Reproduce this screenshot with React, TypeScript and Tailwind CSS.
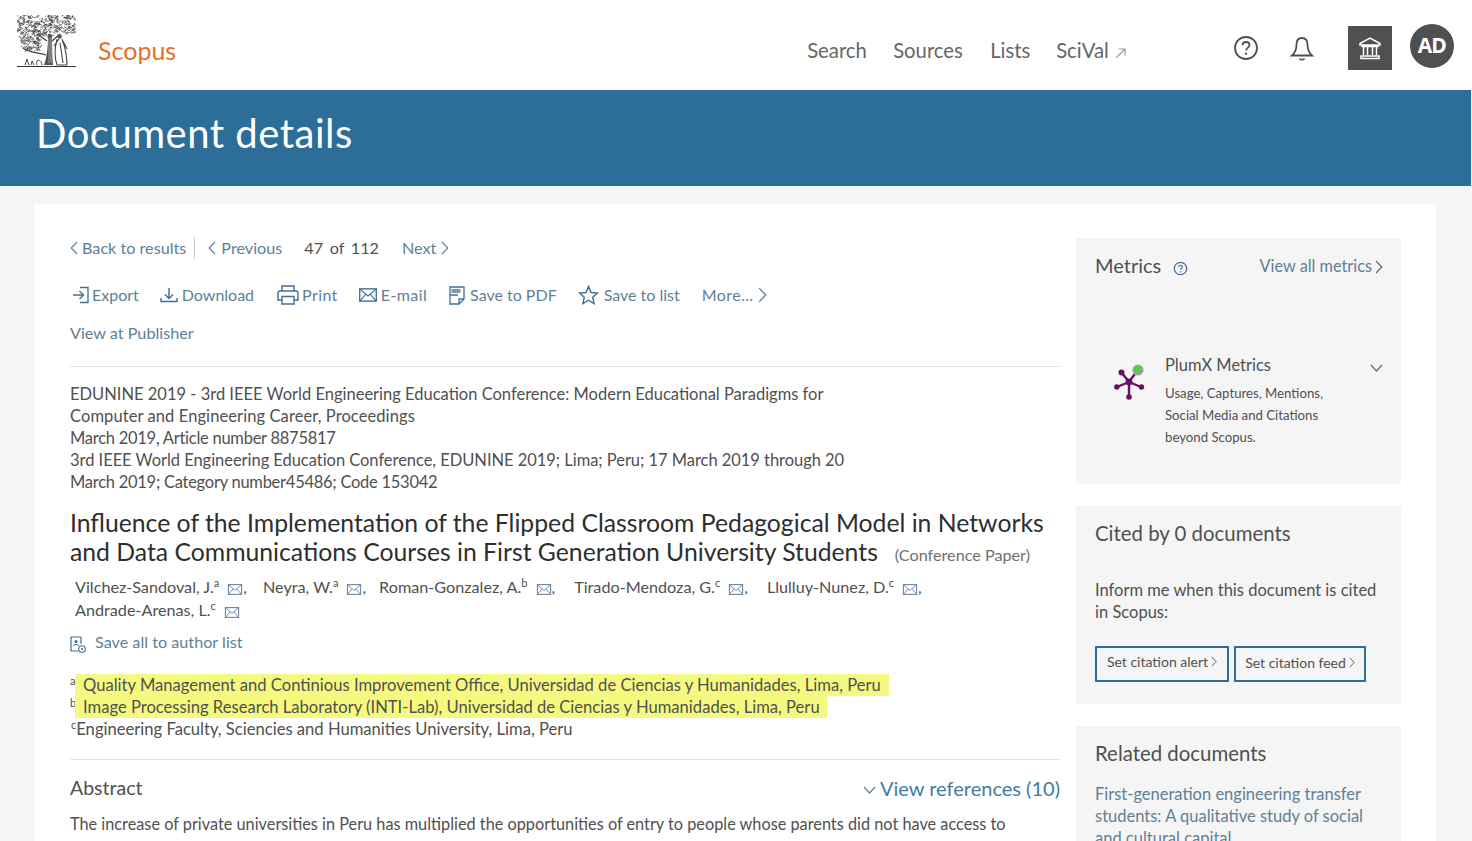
import React from "react";

const font = { fontFamily: "Lato, 'Open Sans', sans-serif" };

function Tree() {
  const strokes: string[] = [];
  let s = 11;
  const r = () => {
    s = (s * 16807) % 2147483647;
    return s / 2147483647;
  };
  for (let i = 0; i < 620; i++) {
    const x = 1 + r() * 57;
    const y = r() * 36;
    const a = (r() * 5 - 2.5).toFixed(1);
    const b = (r() * 5 - 2.5).toFixed(1);
    const c = (r() * 6 - 3).toFixed(1);
    const d = (r() * 4 - 2).toFixed(1);
    if (y > 21 && x > 24 && x < 36) continue;
    if (y > 18 && x >= 36) continue;
    if (y > 26 && x < 5) continue;
    strokes.push(`M${x.toFixed(1)} ${y.toFixed(1)}q${a} ${b} ${c} ${d}`);
  }
  return (
    <svg width="60" height="53" viewBox="0 0 60 53" fill="none">
      <path d={strokes.join("")} stroke="#4a4a4a" strokeWidth="0.75" />
      <path d="M31 20C31 32 30 42 27 50L36 50C35 40 35 30 35 20z" fill="#555" />
      <path d="M32 23V48M34 23V48" stroke="#ddd" strokeWidth="0.6" />
      <path d="M30 26L20 19M35 26L43 19M6 33C12 38 20 37 29 40" stroke="#444" strokeWidth="1.3" />
      <path d="M40 24C38 32 37 42 40 50M45 24C48 32 50 42 50 50M37 31L42 24M46 26L50 34M40 50H50M43 28L46 48" stroke="#444" strokeWidth="1.1" />
      <circle cx="42.500" cy="21.500" r="2.300" fill="#555" />
      <path d="M0 51.500H59" stroke="#333" strokeWidth="1.200" />
      <path d="M8 50L10 44L12 50M14 50L15 46L17 50M20 50C18 44 24 43 25 50" stroke="#444" strokeWidth="1" />
    </svg>
  );
}

function ChevLeft({ c = "#5e7f98", h = 14 }: { c?: string; h?: number }) {
  return (
    <svg width="8" height={h} viewBox="0 0 8 14" fill="none">
      <path d="M7 1L1.200 7L7 13" stroke={c} strokeWidth="1.200" />
    </svg>
  );
}

function ChevRight({ c = "#5e7f98", h = 14, w = 8 }: { c?: string; h?: number; w?: number }) {
  return (
    <svg width={w} height={h} viewBox="0 0 8 14" fill="none" preserveAspectRatio="none">
      <path d="M1 1L6.800 7L1 13" stroke={c} strokeWidth="1.200" />
    </svg>
  );
}

function Mail({ c = "#3f6d95", w = 17, h = 13 }: { c?: string; w?: number; h?: number }) {
  return (
    <svg width={w} height={h} viewBox="0 0 17 13" fill="none">
      <rect x="0.700" y="0.700" width="15.600" height="11.600" stroke={c} strokeWidth="1.300" />
      <path d="M1 1L8.500 7.500L16 1M1 12L6.300 5.800M16 12L10.700 5.800" stroke={c} strokeWidth="1.100" />
    </svg>
  );
}

function Highlight({ children, w }: { children: React.ReactNode; w: string }) {
  return <div className={`h-[22px] bg-[#f6f980] pl-[8px] leading-[23px] ${w}`}>{children}</div>;
}

function Author({ name, sup, comma = true, cls = "" }: { name: string; sup: string; comma?: boolean; cls?: string }) {
  return (
    <span className={`inline-flex items-center ${cls}`}>
      <span>
        {name}
        <sup className="top-[-6px] text-[11px]">{sup}</sup>
      </span>
      <span className="ml-[8px] mt-[6px] flex items-center">
        <Mail c="#6d87a8" w={16} h={11} />
      </span>
      {comma && <span>,</span>}
    </span>
  );
}

export default function App() {
  return (
    <div className="h-[841px] w-[1472px] overflow-hidden bg-[#f5f5f5] text-[#505050]" style={font}>
      <header className="flex h-[90px] items-center bg-white">
        <div className="mb-[4px] ml-[17px] mt-[-3px]">
          <Tree />
        </div>
        <span className="ml-[21px] mt-[12px] text-[25px] text-[#e86f26]">Scopus</span>
        <nav className="ml-[631px] mt-[11px] flex items-center text-[20.300px] text-[#666]">
          <span className="w-[86px]">Search</span>
          <span className="w-[97px]">Sources</span>
          <span className="w-[66px]">Lists</span>
          <span>SciVal</span>
          <svg className="ml-[6px] mt-[5px]" width="12" height="12" viewBox="0 0 12 12" fill="none">
            <path d="M1.500 10.500L10 2M3.500 2H10V8.500" stroke="#999" strokeWidth="1.200" />
          </svg>
        </nav>
        <svg className="ml-[106px] mt-[6px]" width="26" height="26" viewBox="0 0 26 26" fill="none">
          <circle cx="13" cy="13" r="11" stroke="#505050" strokeWidth="1.800" />
          <path d="M9.500 10.200C9.600 8 11.200 7 13 7c2 0 3.500 1.200 3.500 3 0 2.600-3.400 2.700-3.400 5.600" stroke="#505050" strokeWidth="1.800" />
          <circle cx="13" cy="18.600" r="1.200" fill="#505050" />
        </svg>
        <svg className="ml-[30px] mt-[8px]" width="26" height="26" viewBox="0 0 26 26" fill="none">
          <path d="M13 2c-4 0-5.500 2.800-5.500 6.500 0 5-1.200 8-4.500 11h20c-3.300-3-4.500-6-4.500-11C18.500 4.800 17 2 13 2z" stroke="#505050" strokeWidth="1.800" />
          <path d="M10.500 22.500c1 1.600 4 1.600 5 0" stroke="#505050" strokeWidth="1.500" />
        </svg>
        <div className="ml-[33px] mt-[6px] flex h-[44px] w-[44px] items-center justify-center bg-[#505050]">
          <svg width="24" height="24" viewBox="0 0 24 24" fill="none">
            <path d="M2 7.500L12 2l10 5.500v1.500H2zM4 9v1.500h16V9M5.500 11v8M9.500 11v8M14.500 11v8M18.500 11v8M3 20h18v2.500H3z" stroke="#fff" strokeWidth="1.500" />
          </svg>
        </div>
        <div className="ml-[18px] mt-[2px] flex h-[44px] w-[44px] items-center justify-center rounded-full bg-[#505050] text-[21px] font-bold text-white" style={{ fontFamily: "'Open Sans', sans-serif", letterSpacing: "-1px" }}>
          AD
        </div>
      </header>

      <div className="flex h-[96px] w-[1471px] items-center bg-[#2d6e99] pl-[36px]">
        <h1 className="mb-[10px] text-[40px] leading-none tracking-[0.5px] text-white">Document details</h1>
      </div>

      <div className="h-[655px] px-[35px] pt-[18px]">
        <div className="flex h-[700px] w-[1401px] bg-white pl-[35px] pt-[34px]">
          <main className="mt-[-1px] w-[990px] text-[16.500px]">
            <div className="flex h-[22px] items-center text-[16.200px] text-[#5e7f98]">
              <ChevLeft />
              <span className="ml-[4px]">Back to results</span>
              <span className="ml-[8px] h-[22px] w-px bg-[#ccc]" />
              <span className="ml-[13px]"><ChevLeft /></span>
              <span className="ml-[5px]">Previous</span>
              <span className="ml-[22px] text-[#505050]" style={{ wordSpacing: "2.500px" }}>47 of 112</span>
              <span className="ml-[23px]">Next</span>
              <span className="ml-[5px]"><ChevRight /></span>
            </div>

            <div className="mt-[25px] flex h-[22px] items-center text-[16px] text-[#5e7f98]">
              <svg width="18" height="18" viewBox="0 0 18 18" fill="none" className="ml-[2px]">
                <path d="M1 9H11M7.500 5L11.500 9L7.500 13M8 1.500H16V16.500H8" stroke="#3f6d95" strokeWidth="1.300" />
              </svg>
              <span className="ml-[2px]">Export</span>
              <svg width="18" height="16" viewBox="0 0 18 16" fill="none" className="ml-[21px]">
                <path d="M9 1V11M5 7.500L9 11.500L13 7.500M1 11V14.500H17V11" stroke="#3f6d95" strokeWidth="1.400" />
              </svg>
              <span className="ml-[4px]">Download</span>
              <svg width="22" height="20" viewBox="0 0 22 20" fill="none" className="ml-[23px]">
                <path d="M5 6V1H17V6M5 15H1V8C1 7 2 6 3 6H19C20 6 21 7 21 8V15H17M5 11.500H17V19H5z" stroke="#3f6d95" strokeWidth="1.400" />
              </svg>
              <span className="ml-[3px] tracking-[0.4px]">Print</span>
              <span className="ml-[21px]"><Mail w={18} h={14} /></span>
              <span className="ml-[4px] tracking-[0.4px]">E-mail</span>
              <svg width="16" height="19" viewBox="0 0 16 19" fill="none" className="ml-[22px]">
                <path d="M1 1H15V13L10 18H1zM10 18V13H15M1 9H9" stroke="#3f6d95" strokeWidth="1.300" />
                <rect x="2.500" y="3" width="9" height="4" fill="#7d97b0" />
              </svg>
              <span className="ml-[5px]">Save to PDF</span>
              <svg width="21" height="20" viewBox="0 0 21 20" fill="none" className="ml-[21px]">
                <path d="M10.500 1.500L13.100 7.500L19.500 8L14.700 12.200L16.100 18.500L10.500 15.200L4.900 18.500L6.300 12.200L1.500 8L7.900 7.500z" stroke="#3f6d95" strokeWidth="1.400" />
              </svg>
              <span className="ml-[5px]">Save to list</span>
              <span className="ml-[22px] tracking-[0.4px]">More...</span>
              <span className="ml-[4px]"><ChevRight h={16} w={9} /></span>
            </div>

            <div className="mt-[16px] text-[16.200px] leading-[22px] text-[#5e7f98]">View at Publisher</div>

            <div className="mt-[22px] h-px bg-[#e4e4e4]" />

            <div className="mt-[16px] w-[790px] leading-[22px]">
              <div>EDUNINE 2019 - 3rd IEEE World Engineering Education Conference: Modern Educational Paradigms for</div>
              <div className="tracking-[0.09px]">Computer and Engineering Career, Proceedings</div>
              <div className="tracking-[-0.26px]">March 2019, Article number 8875817</div>
              <div className="tracking-[-0.04px]">3rd IEEE World Engineering Education Conference, EDUNINE 2019; Lima; Peru; 17 March 2019 through 20</div>
              <div className="tracking-[-0.26px]">March 2019; Category number45486; Code 153042</div>
            </div>

            <div className="mt-[15px] w-[985px] text-[24.750px] leading-[29px] text-[#2e2e2e]">
              Influence of the Implementation of the Flipped Classroom Pedagogical Model in Networks and Data Communications Courses in First Generation University Students
              <span className="ml-[17px] text-[16.200px] text-[#707070]">(Conference Paper)</span>
            </div>

            <div className="ml-[5px] mt-[6px] text-[16.200px] leading-[23px]">
              <div className="flex">
                <Author name="Vilchez-Sandoval, J." sup="a" />
                <Author name="Neyra, W." sup="a" cls="ml-[16px]" />
                <Author name="Roman-Gonzalez, A." sup="b" cls="ml-[13px]" />
                <Author name="Tirado-Mendoza, G." sup="c" cls="ml-[19px]" />
                <Author name="Llulluy-Nunez, D." sup="c" cls="ml-[19px]" />
              </div>
              <Author name="Andrade-Arenas, L." sup="c" comma={false} />
            </div>

            <div className="mt-[9px] flex h-[24px] items-center text-[16.200px] text-[#5e7f98]">
              <svg width="16" height="17" viewBox="0 0 16 17" fill="none" className="mt-[5px]">
                <path d="M11 1H1V15H8M11 1V8" stroke="#3f6d95" strokeWidth="1.200" />
                <circle cx="6" cy="5.500" r="1.500" fill="#3f6d95" />
                <path d="M3 10C3.500 8 8.500 8 9 10" stroke="#3f6d95" />
                <circle cx="12" cy="13" r="3.300" stroke="#3f6d95" strokeWidth="1.100" />
                <circle cx="12" cy="13" r="1" fill="#3f6d95" />
              </svg>
              <span className="ml-[9px]">Save all to author list</span>
            </div>

            <div className="mt-[20px] text-[16.600px] leading-[22px]">
              <div className="flex">
                <span className="w-[5px] text-[11px] leading-[14px]">a</span>
                <Highlight w="w-[814px]">Quality Management and Continious Improvement Office, Universidad de Ciencias y Humanidades, Lima, Peru</Highlight>
              </div>
              <div className="flex">
                <span className="w-[5px] text-[11px] leading-[14px]">b</span>
                <Highlight w="w-[752px]">Image Processing Research Laboratory (INTI-Lab), Universidad de Ciencias y Humanidades, Lima, Peru</Highlight>
              </div>
              <div className="pl-px">
                <sup className="top-[-6px] text-[11px]">c</sup>Engineering Faculty, Sciencies and Humanities University, Lima, Peru
              </div>
            </div>

            <div className="mt-[19px] h-px bg-[#e4e4e4]" />

            <div className="mt-[14px] flex h-[28px] items-center justify-between">
              <span className="text-[19.500px] text-[#505050]">Abstract</span>
              <span className="flex items-center text-[20px] text-[#3f7ca6]">
                <svg width="13" height="8" viewBox="0 0 13 8" fill="none" className="mr-[4px] mt-[3px]">
                  <path d="M1 1L6.500 7L12 1" stroke="#5e7f98" strokeWidth="1.200" />
                </svg>
                View references (10)
              </span>
            </div>

            <div className="mt-[11px] text-[16.300px] leading-[22px]">
              The increase of private universities in Peru has multiplied the opportunities of entry to people whose parents did not have access to
            </div>
          </main>

          <aside className="ml-[16px] w-[325px]">
            <section className="h-[246px] bg-[#f5f5f6] px-[19px] pt-[14px]">
              <div className="flex h-[28px] items-center">
                <span className="mb-[2px] text-[20px] text-[#505050]">Metrics</span>
                <svg width="15" height="15" viewBox="0 0 15 15" fill="none" className="ml-[12px] mt-[5px]">
                  <circle cx="7.500" cy="7.500" r="6.200" stroke="#4a6d92" strokeWidth="1.300" />
                  <path d="M5.600 6C5.700 4.800 6.500 4.300 7.500 4.300c1.100 0 1.900.7 1.900 1.600 0 1.400-1.900 1.400-1.900 2.900" stroke="#4a6d92" strokeWidth="1.100" />
                  <circle cx="7.500" cy="10.700" r=".7" fill="#4a6d92" />
                </svg>
                <span className="ml-auto text-[16.300px] text-[#5e7f98]">View all metrics</span>
                <span className="ml-[3px] mr-[-1px] mt-[2px]"><ChevRight h={14} w={8} c="#666" /></span>
              </div>
              <div className="mt-[14px] h-px bg-[#f0f0f0]" />
              <div className="mt-[58px] flex">
                <svg width="34" height="40" viewBox="0 0 34 40" fill="none" className="ml-[19px] mt-[9px] shrink-0">
                  <g stroke="#6a0f63" strokeWidth="2.400" strokeLinecap="round">
                    <path d="M15 20L8 11M15 20L23 9M15 20L3 25M15 20L27 25M15 20L15 34" />
                  </g>
                  <circle cx="15" cy="20" r="3.400" fill="#6a0f63" />
                  <circle cx="7.500" cy="10.500" r="3" fill="#6a0f63" />
                  <circle cx="2.800" cy="25" r="2.700" fill="#6a0f63" />
                  <circle cx="27.500" cy="25" r="2.700" fill="#6a0f63" />
                  <circle cx="15" cy="35" r="2.800" fill="#6a0f63" />
                  <circle cx="24" cy="8" r="5" fill="#68c24f" stroke="#a5a8a5" strokeWidth="1.200" />
                </svg>
                <div className="ml-[17px] flex-1">
                  <div className="flex h-[24px] items-center text-[16.500px]">PlumX Metrics</div>
                  <div className="mt-[5px] w-[170px] text-[13.200px] leading-[22px]">
                    Usage, Captures, Mentions, Social Media and Citations beyond Scopus.
                  </div>
                </div>
                <svg width="13" height="8" viewBox="0 0 13 8" fill="none" className="mr-[-1px] mt-[11px]">
                  <path d="M1 1L6.500 7L12 1" stroke="#4a6d92" strokeWidth="1.200" />
                </svg>
              </div>
            </section>

            <section className="mt-[22px] h-[198px] bg-[#f5f5f6] px-[19px] pt-[12px]">
              <div className="text-[20.400px] leading-[30px]">Cited by 0 documents</div>
              <div className="mt-[31px] w-[290px] text-[16.500px] leading-[22px]">
                Inform me when this document is cited in Scopus:
              </div>
              <div className="mt-[23px] flex gap-[5px]">
                <div className="flex h-[36px] w-[134px] items-center justify-center border-2 border-[#2d6e99] pb-[6px] text-[14px]">
                  Set citation alert<span className="ml-[3px]"><ChevRight h={11} w={6} c="#555" /></span>
                </div>
                <div className="flex h-[36px] w-[132px] items-center justify-center border-2 border-[#2d6e99] pb-[4px] text-[14px]">
                  Set citation feed<span className="ml-[3px]"><ChevRight h={11} w={6} c="#555" /></span>
                </div>
              </div>
            </section>

            <section className="mt-[22px] h-[200px] bg-[#f5f5f6] px-[19px] pt-[12px]">
              <div className="text-[20.400px] leading-[30px]">Related documents</div>
              <div className="mt-[14px] h-px bg-[#f0f0f0]" />
              <div className="w-[290px] text-[16.500px] leading-[22px] text-[#5e7f98]">
                First-generation engineering transfer students: A qualitative study of social and cultural capital
              </div>
            </section>
          </aside>
        </div>
      </div>
    </div>
  );
}
